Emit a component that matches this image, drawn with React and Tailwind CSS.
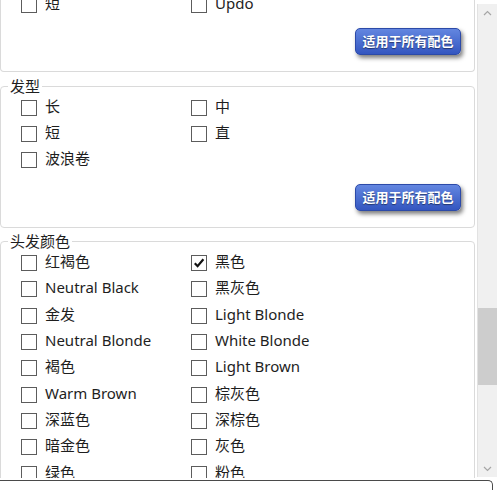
import React from 'react';

const font = { fontFamily: '"Noto Sans", "Noto Sans CJK SC", sans-serif' };

const Check = ({ checked }) => (
  <span className="mt-[2px] flex h-[16px] w-[16px] shrink-0 items-center justify-center border border-[#5c5c5c] bg-white">
    {checked && (
      <svg width="12" height="12" viewBox="0 0 12 12">
        <path d="M1.8 6.2 L4.6 9.2 L10.4 2.2" fill="none" stroke="#111" strokeWidth="2.2" />
      </svg>
    )}
  </span>
);

const Options = ({ items }) => (
  <div className="grid grid-cols-[170px_1fr] pl-[20px]">
    {items.map(([label, checked], i) => (
      <div key={i} className="flex h-[26.4px] items-center gap-[8px] text-[15px] leading-[20px] text-[#1e1e1e]">
        <Check checked={checked} />
        <span className="pb-[2px]">{label}</span>
      </div>
    ))}
  </div>
);

const ApplyButton = () => (
  <div className="flex justify-end pr-[13px] pt-[11px] pb-[16px]">
    <button className="h-[27px] w-[106px] rounded-[5px] border border-[#2c4aa8] bg-gradient-to-b from-[#6386e0] to-[#3456c0] text-[13px] font-bold leading-[25px] text-white shadow-[2px_3px_4px_rgba(0,0,0,0.5)] [text-shadow:0_1px_1px_rgba(0,0,0,0.45)]">
      适用于所有配色
    </button>
  </div>
);

const Group = ({ title, items }) => (
  <fieldset className="w-[475px] rounded-[4px] border border-[#dadada]">
    <legend className="ml-[7px] flex h-[14px] items-center px-[2px] text-[15px] leading-[14px] text-[#1e1e1e]">
      <span className="pb-[1px]">{title}</span>
    </legend>
    <Options items={items} />
    {title === '发型' && <ApplyButton />}
  </fieldset>
);

const Chevron = ({ up }) => (
  <div className="flex h-[17px] items-center justify-center">
    <svg width="9" height="6" viewBox="0 0 9 6">
      <path d={up ? 'M1 5 L4.5 1.5 L8 5' : 'M1 1 L4.5 4.5 L8 1'} fill="none" stroke="#a6a6a6" strokeWidth="1.2" />
    </svg>
  </div>
);

const hairType = [['长'], ['中'], ['短'], ['直'], ['波浪卷']];

const hairColor = [
  ['红褐色'], ['黑色', true],
  ['Neutral Black'], ['黑灰色'],
  ['金发'], ['Light Blonde'],
  ['Neutral Blonde'], ['White Blonde'],
  ['褐色'], ['Light Brown'],
  ['Warm Brown'], ['棕灰色'],
  ['深蓝色'], ['深棕色'],
  ['暗金色'], ['灰色'],
  ['绿色'], ['粉色'],
];

export default function App() {
  return (
    <div className="flex h-[490px] w-[497px] flex-col overflow-hidden bg-white" style={font}>
      <div className="flex h-[478px]">
        {/* scrolled content */}
        <div className="h-[478px] w-[477px] overflow-hidden">
          <div className="mt-[-9px] flex flex-col gap-[7px]">
            <div className="w-[475px] rounded-b-[4px] border-x border-b border-[#dadada]">
              <Options items={[['短'], ['Updo']]} />
              <ApplyButton />
            </div>
            <Group title="发型" items={hairType} />
            <Group title="头发颜色" items={hairColor} />
          </div>
        </div>

        {/* scrollbar */}
        <div className="mt-[4px] flex h-[473px] w-[20px] flex-col border-l border-[#e2e2e2] bg-[#f0f0f0]">
          <Chevron up />
          <div className="flex flex-1 flex-col">
            <div className="h-[287px]" />
            <div className="h-[77px] bg-[#cdcdcd]" />
          </div>
          <Chevron />
        </div>
      </div>

      {/* bottom box */}
      <div className="mt-[2px] h-[12px] w-[493px] rounded-tr-[5px] border-t border-r border-[#4a4a4a]" />
    </div>
  );
}
